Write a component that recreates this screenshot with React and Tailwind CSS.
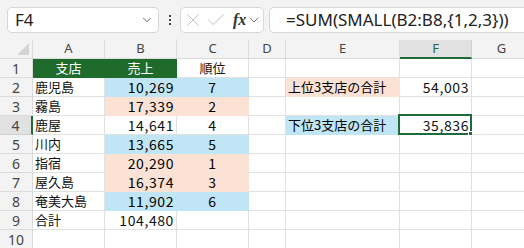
import { X, Check, ChevronDown } from 'lucide-react';

const COLS = ['A', 'B', 'C', 'D', 'E', 'F', 'G'];

const BLUE = 'bg-[#c0e6f5] border-[#c0e6f5]';
const ORANGE = 'bg-[#fbe2d5] border-[#fbe2d5]';
const GREEN = 'bg-[#1f6b2c] border-[#1f6b2c] text-white';

// each row: [A, B, C, D, E, F] with optional fill per row
const rows = [
  { n: 1, cells: ['支店', '売上', '順位', '', '', ''], fill: { A: GREEN, B: GREEN }, align: { A: 'center', B: 'center', C: 'center' } },
  { n: 2, cells: ['鹿児島', '10,269', '7', '', '上位3支店の合計', '54,003'], fill: { B: BLUE, C: BLUE, E: ORANGE } },
  { n: 3, cells: ['霧島', '17,339', '2', '', '', ''], fill: { B: ORANGE, C: ORANGE } },
  { n: 4, cells: ['鹿屋', '14,641', '4', '', '下位3支店の合計', '35,836'], fill: { E: BLUE } },
  { n: 5, cells: ['川内', '13,665', '5', '', '', ''], fill: { B: BLUE, C: BLUE } },
  { n: 6, cells: ['指宿', '20,290', '1', '', '', ''], fill: { B: ORANGE, C: ORANGE } },
  { n: 7, cells: ['屋久島', '16,374', '3', '', '', ''], fill: { B: ORANGE, C: ORANGE } },
  { n: 8, cells: ['奄美大島', '11,902', '6', '', '', ''], fill: { B: BLUE, C: BLUE } },
  { n: 9, cells: ['合計', '104,480', '', '', '', ''], fill: {} },
  { n: 10, cells: ['', '', '', '', '', ''], fill: {} },
];

const defaultAlign = { A: 'left', B: 'right', C: 'center', D: 'left', E: 'left', F: 'right' };

function Cell({ col, value, fill, align, selected }) {
  const a = align || defaultAlign[col];
  const justify = a === 'center' ? 'justify-center' : a === 'right' ? 'justify-end pr-[2px]' : 'justify-start pl-[2px]';
  const numeric = /^[\d,]+$/.test(value);
  return (
    <div className={`relative h-[19px] flex items-center border-r border-b whitespace-nowrap ${justify} ${fill || 'bg-white border-[#e1e1e1] text-[#111]'}`}>
      <span className={numeric ? 'text-[14px] tracking-[0.6px]' : ''}>{value}</span>
      {selected && (
        <>
          <div className="absolute -left-[2px] -top-[2px] -right-[1px] -bottom-[1px] border-2 border-[#1e6b3a]" />
          <div className="absolute -right-[3px] -bottom-[3px] w-[6px] h-[6px] bg-[#1e6b3a] border border-white" />
        </>
      )}
    </div>
  );
}

export default function App() {
  return (
    <div className="w-[524px] h-[248px] overflow-hidden bg-white" style={{ fontFamily: '"Noto Sans CJK JP", "Noto Sans", sans-serif' }}>
      {/* Formula bar */}
      <div className="h-[40px] bg-[#f3f3f3] flex items-start pt-[7px]" style={{ fontFamily: '"Noto Sans", "Open Sans", sans-serif' }}>
        <div className="shrink-0 ml-[7px] w-[152px] h-[26px] rounded-[5px] border border-[#d6d6d6] bg-white flex items-center justify-between pl-[7px] pr-[4px]">
          <span className="text-[17px] text-[#222]">F4</span>
          <ChevronDown size={14} strokeWidth={1.5} className="text-[#555]" />
        </div>
        <div className="shrink-0 w-[21px] h-[26px] flex flex-col items-center justify-center gap-[2px]">
          <div className="w-[2px] h-[2px] bg-[#444]" />
          <div className="w-[2px] h-[2px] bg-[#444]" />
          <div className="w-[2px] h-[2px] bg-[#444]" />
        </div>
        <div className="shrink-0 w-[84px] h-[26px] rounded-[5px] border border-[#d6d6d6] bg-white flex items-center pl-[1px]">
          <X size={22} strokeWidth={1} className="text-[#bcbcbc]" />
          <Check size={22} strokeWidth={1} className="ml-[1px] text-[#bcbcbc]" />
          <span className="ml-[6px] text-[16px] italic font-bold text-[#333]" style={{ fontFamily: '"Liberation Serif", serif' }}>fx</span>
          <ChevronDown size={16} strokeWidth={1.2} className="text-[#555]" />
        </div>
        <div className="shrink-0 ml-[5px] w-[270px] h-[26px] rounded-l-[5px] border border-r-0 border-[#d6d6d6] bg-white flex items-center pl-[16px]">
          <span className="text-[17px] text-[#222] whitespace-nowrap">=SUM(SMALL(B2:B8,{'{'}1,2,3{'}'}))</span>
        </div>
      </div>

      {/* Grid */}
      <div className="grid grid-cols-[33px_72px_72px_72px_37px_114px_72px_60px] text-[13px]">
        {/* header row */}
        <div className="relative h-[19px] bg-[#f3f3f3] border-r border-b border-[#dadada]">
          <div className="absolute right-[3px] bottom-[3px] w-0 h-0 border-l-[12px] border-l-transparent border-b-[12px] border-b-[#d4d4d4]" />
        </div>
        {COLS.map((c) => (
          <div
            key={c}
            className={`h-[19px] flex items-center justify-center text-[13px] border-r ${
              c === 'F'
                ? 'bg-[#e1e1e1] text-[#1e6b3a] border-b-2 border-b-[#1e6b3a] border-r-[#d0d0d0]'
                : 'bg-[#f3f3f3] text-[#444] border-b border-[#dadada]'
            }`}
            style={{ fontFamily: '"Noto Sans", sans-serif' }}
          >
            {c}
          </div>
        ))}

        {rows.map((r) => (
          <div key={r.n} className="contents">
            <div
              className={`h-[19px] flex items-center justify-center text-[14px] border-b ${
                r.n === 4
                  ? 'bg-[#e1e1e1] text-[#444] border-r-2 border-r-[#1e6b3a] border-b-[#d0d0d0]'
                  : 'bg-[#f3f3f3] text-[#444] border-r border-[#dadada]'
              }`}
              style={{ fontFamily: '"Noto Sans", sans-serif' }}
            >
              {r.n}
            </div>
            {['A', 'B', 'C', 'D', 'E', 'F'].map((c, i) => (
              <Cell
                key={c}
                col={c}
                value={r.cells[i]}
                fill={r.fill[c]}
                align={r.align && r.align[c]}
                selected={r.n === 4 && c === 'F'}
              />
            ))}
            <Cell col="G" value="" />
          </div>
        ))}
      </div>
    </div>
  );
}
